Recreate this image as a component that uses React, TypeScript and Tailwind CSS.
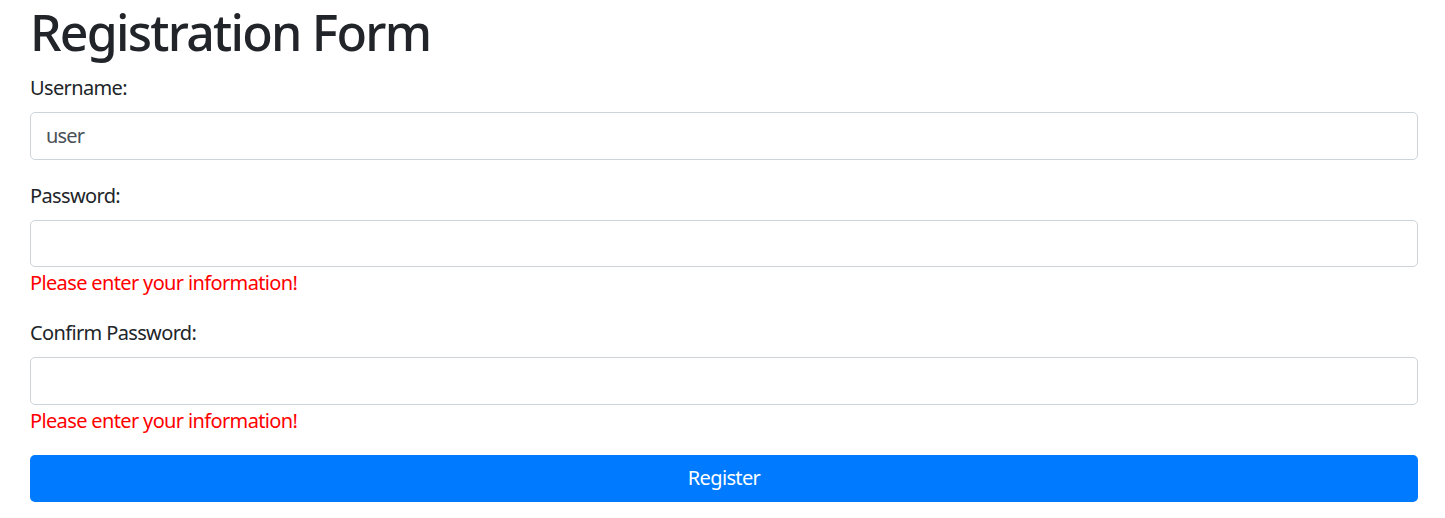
import React, { useState } from 'react';

const Field: React.FC<{
  label: string;
  type: string;
  value: string;
  onChange: (v: string) => void;
  error?: string;
}> = ({ label, type, value, onChange, error }) => (
  <div className="mb-[20px] flex flex-col">
    <label className="mb-[10px] pt-[1px] text-[20px] leading-[29px] text-[#212529]">{label}</label>
    <input
      type={type}
      value={value}
      onChange={(e) => onChange(e.target.value)}
      className="h-[47.5px] w-full rounded-[5px] border border-[#ced4da] bg-white px-[15px] text-[20px] tracking-[-0.04em] text-[#495057] outline-none"
    />
    {error && <div className="pt-[1px] text-[20px] leading-[29px] text-[#ff0000]">{error}</div>}
  </div>
);

const App: React.FC = () => {
  const [username, setUsername] = useState('user');
  const [password, setPassword] = useState('');
  const [confirm, setConfirm] = useState('');

  return (
    <div className="min-h-screen bg-white font-['Noto_Sans',sans-serif] tracking-[-0.04em]">
      <div className="ml-[30px] w-[1388px] pt-[2px]">
        <h1 className="mb-[10px] pt-[1px] text-[50px] font-medium leading-[59px] tracking-[-0.035em] text-[#212529]">
          Registration Form
        </h1>
        <form onSubmit={(e) => e.preventDefault()}>
          <Field label="Username:" type="text" value={username} onChange={setUsername} />
          <Field
            label="Password:"
            type="password"
            value={password}
            onChange={setPassword}
            error={password ? undefined : 'Please enter your information!'}
          />
          <Field
            label="Confirm Password:"
            type="password"
            value={confirm}
            onChange={setConfirm}
            error={confirm ? undefined : 'Please enter your information!'}
          />
          <button
            type="submit"
            className="h-[47.5px] w-full rounded-[5px] bg-[#007bff] text-[20px] text-white"
          >
            Register
          </button>
        </form>
      </div>
    </div>
  );
};

export default App;
